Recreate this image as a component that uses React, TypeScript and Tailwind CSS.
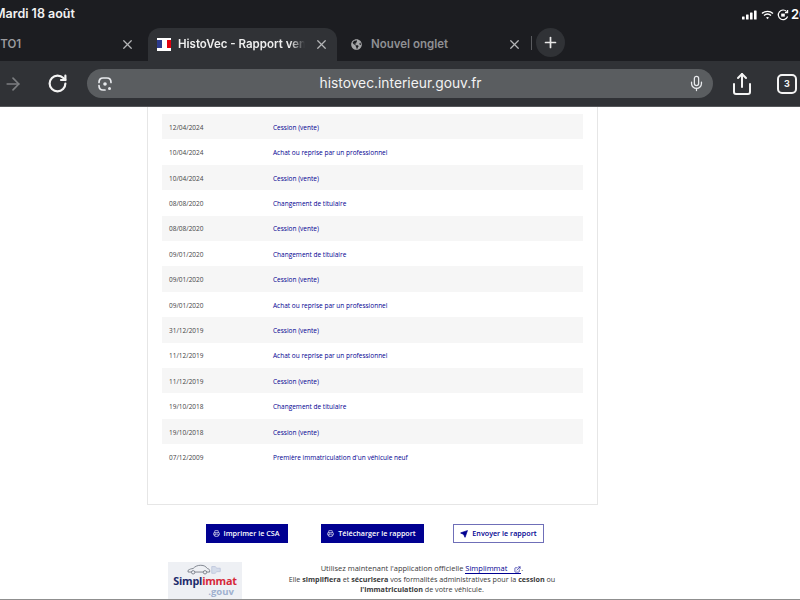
import React from 'react';
import { X, Plus, ArrowRight, RotateCw, Mic, Share, Printer, Send, ExternalLink } from 'lucide-react';
import { FaGlobeAmericas } from 'react-icons/fa';

const ROWS = [
  ['12/04/2024', 'Cession (vente)'],
  ['10/04/2024', 'Achat ou reprise par un professionnel'],
  ['10/04/2024', 'Cession (vente)'],
  ['08/08/2020', 'Changement de titulaire'],
  ['08/08/2020', 'Cession (vente)'],
  ['09/01/2020', 'Changement de titulaire'],
  ['09/01/2020', 'Cession (vente)'],
  ['09/01/2020', 'Achat ou reprise par un professionnel'],
  ['31/12/2019', 'Cession (vente)'],
  ['11/12/2019', 'Achat ou reprise par un professionnel'],
  ['11/12/2019', 'Cession (vente)'],
  ['19/10/2018', 'Changement de titulaire'],
  ['19/10/2018', 'Cession (vente)'],
  ['07/12/2009', "Première immatriculation d'un véhicule neuf"],
];

function StatusIcons() {
  return (
    <div className="flex w-[58px] shrink-0 items-center gap-[3px]">
      {/* signal bars */}
      <svg width="16" height="10" viewBox="0 0 16 10" fill="white" className="shrink-0">
        <rect x="0" y="6.5" width="2.6" height="3" rx="0.5" />
        <rect x="4" y="4.5" width="2.6" height="5" rx="0.5" />
        <rect x="8" y="2.5" width="2.6" height="7" rx="0.5" />
        <rect x="12" y="0.5" width="2.6" height="9" rx="0.5" />
      </svg>
      {/* wifi */}
      <svg width="13" height="10" viewBox="0 0 13 10" fill="none" stroke="white" strokeWidth="1.4" className="shrink-0">
        <path d="M1 3.4C4 .7 9 .7 12 3.4" />
        <path d="M3 5.5c2-1.7 5-1.7 7 0" />
        <path d="M6.5 9.2 5 7.6c.9-.7 2.1-.7 3 0z" fill="white" stroke="none" />
      </svg>
      {/* orientation lock */}
      <svg width="12" height="12" viewBox="0 0 12 12" fill="none" stroke="white" strokeWidth="1.2" className="shrink-0">
        <path d="M10.6 7.5A4.8 4.8 0 1 1 9.7 2.6" />
        <path d="M10.6 1v2.6H8" />
        <rect x="4.2" y="4.6" width="3.6" height="3" fill="white" stroke="none" />
      </svg>
      <span className="ml-[-1px] text-[13px] font-semibold text-white">26</span>
    </div>
  );
}

function LensIcon() {
  return (
    <svg width="16" height="16" viewBox="0 0 16 16" fill="none" stroke="#e8eaed" strokeWidth="1.7" strokeLinecap="round">
      <path d="M2 6.5C2 3.5 3.5 2 6 2h4c2.500 0 4 1.500 4 4.500" />
      <path d="M2 9.500C2 12.500 3.500 14 6 14h2" />
      <circle cx="8" cy="8" r="1.800" fill="#e8eaed" stroke="none" />
      <circle cx="12.500" cy="12.500" r="1.500" fill="#e8eaed" stroke="none" />
    </svg>
  );
}

function Flag() {
  return (
    <div className="flex h-[13px] w-[14px] shrink-0 flex-col bg-white">
      <div className="mt-[2px] flex h-[8px] w-full">
        <div className="w-[5px] bg-[#2b3a8c]" />
        <div className="w-[5px] bg-white" />
        <div className="w-[4px] bg-[#e1000f]" />
      </div>
    </div>
  );
}

function BrowserChrome() {
  return (
    <header className="flex flex-col font-['Inter',sans-serif]">
      <div className="flex h-[28px] items-center justify-between overflow-hidden bg-[#1c1d21] pt-[1px]">
        <span className="ml-[-6px] text-[12.500px] font-semibold text-[#f1f1f1]">Mardi 18 août</span>
        <StatusIcons />
      </div>

      <div className="flex h-[33px] items-stretch bg-[#1c1d21]">
        <div className="flex w-[148px] items-center justify-between pr-[13px]">
          <span className="ml-[-3px] text-[11.500px] font-semibold text-[#9a9b9e]">ITO1</span>
          <X size={15} strokeWidth={2} className="text-[#b4b5b7]" />
        </div>
        <div className="flex w-[189px] items-center rounded-t-[12px] bg-[#303236] pl-[9px] pr-[8px]">
          <Flag />
          <span className="ml-[7px] w-[127px] overflow-hidden whitespace-nowrap text-[11.500px] font-semibold text-[#eeeeee] [mask-image:linear-gradient(to_right,black_88%,transparent)]">HistoVec - Rapport vente</span>
          <X size={15} strokeWidth={2} className="ml-[9px] shrink-0 text-[#b4b5b7]" />
        </div>
        <div className="flex w-[193px] items-center pl-[14px] pr-[8px]">
          <FaGlobeAmericas size={11} className="text-[#a6a7a9]" />
          <span className="ml-[9px] flex-1 text-[11.500px] font-semibold text-[#8f9093]">Nouvel onglet</span>
          <X size={15} strokeWidth={2} className="text-[#b4b5b7]" />
        </div>
        <div className="mx-[1px] mt-[8px] h-[14px] w-[1px] bg-[#5a5b5f]" />
        <div className="ml-[3px] flex h-[29px] w-[29px] items-center justify-center rounded-full bg-[#303236]">
          <Plus size={17} strokeWidth={2.400} className="text-[#e8e8e8]" />
        </div>
      </div>

      <div className="flex h-[46px] items-center border-b border-[#55575a] bg-[#303236]">
        <ArrowRight size={20} strokeWidth={2} className="ml-[3px] text-[#7c7e81]" />
        <RotateCw size={21} strokeWidth={2.500} className="ml-[24px] text-[#f4f4f4]" />
        <div className="ml-[19px] flex h-[29px] w-[626px] items-center rounded-full bg-[#5a5d60] pl-[10px] pr-[8px]">
          <LensIcon />
          <span className="flex-1 text-center text-[13.800px] font-normal text-[#f2f2f2]">histovec.interieur.gouv.fr</span>
          <Mic size={17} strokeWidth={1.800} className="text-[#e8eaed]" />
        </div>
        <Share size={24} strokeWidth={2} className="ml-[17px] text-[#f4f4f4]" />
        <div className="ml-[23px] flex h-[20px] w-[20px] items-center justify-center rounded-[5px] border-2 border-[#f4f4f4] text-[9px] font-bold text-[#f4f4f4]">3</div>
      </div>
    </header>
  );
}

function SimplimmatLogo() {
  return (
    <div className="flex h-[38px] w-[74px] shrink-0 flex-col items-center overflow-hidden bg-[#eef0f4] pt-[2px] font-['Open_Sans',sans-serif] leading-none">
      <svg width="38" height="11" viewBox="0 0 42 13" fill="none" stroke="#6f7680" strokeWidth="1" className="shrink-0">
        <path d="M1 9.500V7.500C3 6 5 5.500 7 5.300 9 3 12 1.500 16 1.500s6 1.500 8 4c1.500.3 2.500 1 2.500 2.200v1.800z" />
        <circle cx="7" cy="9.800" r="2" fill="#eef0f4" />
        <circle cx="21" cy="9.800" r="2" fill="#eef0f4" />
        <path d="M29 3h4l2 2h4v4h-4l-2 2h-4z" stroke="#bcc6dc" fill="#d5dcea" />
      </svg>
      <div className="mt-[1px] text-[10.800px] font-bold tracking-[-0.2px] text-[#1d2b6b]">
        Simpl<span className="text-[#d62839]">immat</span>
      </div>
      <div className="ml-[32px] text-[9.500px] font-bold text-[#9fb0cf]">.gouv</div>
    </div>
  );
}

export default function App() {
  return (
    <div className="flex h-[600px] w-[800px] flex-col overflow-hidden bg-white font-['Open_Sans',sans-serif]">
      <BrowserChrome />

      <main className="relative flex-1 overflow-hidden">
        <div className="ml-[147px] h-[398px] w-[451px] border border-t-0 border-[#e6e6e6] px-[14px] pt-[7px]">
          {ROWS.map(([date, label], i) => (
            <div key={i} className={`flex h-[25.400px] items-center pl-[7px] pt-[2px] ${i % 2 === 0 ? 'bg-[#f6f6f6]' : ''}`}>
              <span className="w-[104px] text-[6.500px] text-[#444444]">{date}</span>
              <span className="text-[6.500px] text-[#000091]">{label}</span>
            </div>
          ))}
        </div>

        <div className="ml-[206px] mt-[19px] flex items-center text-[7.200px] font-semibold">
          <button className="flex h-[19px] w-[82px] items-center justify-center gap-[4px] bg-[#000091] pr-[2px] text-white">
            <Printer size={7} /> Imprimer le CSA
          </button>
          <button className="ml-[33px] flex h-[19px] w-[103px] items-center justify-center gap-[4px] bg-[#000091] pr-[2px] text-white">
            <Printer size={7} /> Télécharger le rapport
          </button>
          <button className="ml-[29px] flex h-[19px] w-[91px] items-center justify-center gap-[4px] border border-[#6f6fb8] text-[#000091]">
            <Send size={8} fill="#000091" /> Envoyer le rapport
          </button>
        </div>

        <div className="ml-[168px] mt-[19px] flex">
          <SimplimmatLogo />
          <p className="ml-[29px] w-[302px] pt-[1px] text-center text-[7.200px] leading-[10.500px] text-[#3a3a3a]">
            <span className="text-[7.500px]">
              Utilisez maintenant l'application officielle{' '}
              <span className="border-b border-[#000091] text-[#000091]">
                Simplimmat <ExternalLink size={7} className="ml-[5px] inline" />
              </span>
              .
            </span>
            <br />
            Elle <b>simplifiera</b> et <b>sécurisera</b> vos formalités administratives pour la <b>cession</b> ou<br />
            <b>l'immatriculation</b> de votre véhicule.
          </p>
        </div>

        <div className="absolute bottom-0 left-0 h-[1px] w-full bg-[#8f8f8f]" />
      </main>
    </div>
  );
}
